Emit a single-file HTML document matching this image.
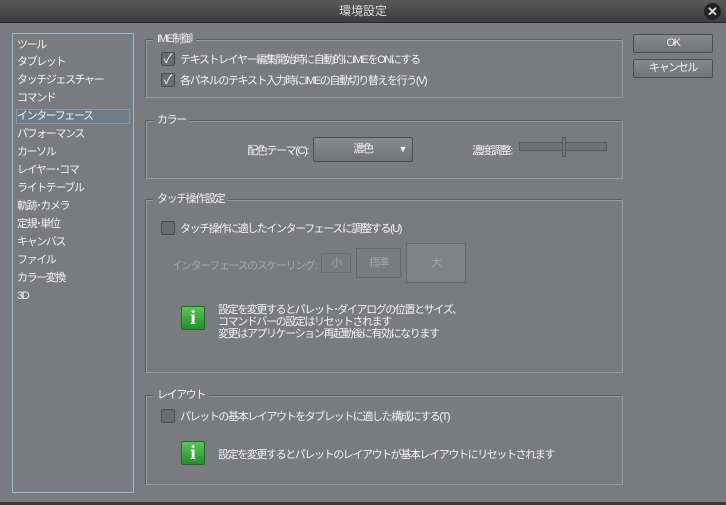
<!DOCTYPE html>
<html><head><meta charset="utf-8"><style>
*{margin:0;padding:0;box-sizing:border-box}
body{width:726px;height:505px;background:#7a7b7e;font-family:"Liberation Sans","Noto Sans CJK JP",sans-serif;font-size:11px;letter-spacing:-1.4px;color:#f2f2f2;position:relative;overflow:hidden}
.abs{position:absolute;white-space:nowrap}
#title{left:0;top:0;width:726px;height:23px;background:linear-gradient(#5a5a5a,#3c3c3c);border-bottom:1px solid #2a2a2a;text-align:center;line-height:23px;color:#ddd;font-size:12px;letter-spacing:0}
#close{right:5px;top:3px;width:17px;height:17px;border-radius:50%;background:#222;color:#ddd;font-weight:bold;font-size:13px;line-height:17px;text-align:center;letter-spacing:0}
#list{left:12px;top:33px;width:122px;height:460px;border:1px solid #9cb8c8}
.it{position:absolute;left:4px;line-height:14px}
#sel{position:absolute;left:3px;top:75px;width:114px;height:15px;background:#6d7c88;border:1px solid #8797a3}
.grp{position:absolute;left:145px;width:478px;border:1px solid #5c5d60;border-right:1px solid #98999c;border-bottom:1px solid #98999c;box-shadow:inset 1px 1px 0 #98999c}
.gt{position:absolute;left:7px;top:-9px;background:#7a7b7e;padding:0 4px;line-height:16px;white-space:nowrap}
.cb{position:absolute;width:14px;height:14px;border:1px solid #4a4b4e;background:#6a6b6e;border-radius:2px;font-size:13px;line-height:12px;text-align:center;color:#eee;letter-spacing:0}
.btn{position:absolute;left:633px;width:80px;height:19px;border:1px solid #4c4d50;background:linear-gradient(#88898c,#727376);border-radius:2px;text-align:center;line-height:17px}
.info{position:absolute;width:24px;height:24px;background:linear-gradient(#5ec35a,#23912a);border:1px solid #1f6b22;border-radius:2px;color:#fff;font-family:"Liberation Serif",serif;font-weight:bold;font-size:20px;text-align:center;line-height:22px;letter-spacing:0}
.dim{color:#a5a6a9}
.r{position:absolute;white-space:nowrap;text-align:right}
</style></head><body>
<div id="title" class="abs">環境設定</div>
<div id="close" class="abs">✕</div>
<div id="list" class="abs">
<div id="sel"></div>
<div class="it" style="top:4px">ツール</div>
<div class="it" style="top:21px">タブレット</div>
<div class="it" style="top:39px">タッチジェスチャー</div>
<div class="it" style="top:57px">コマンド</div>
<div class="it" style="top:75px">インターフェース</div>
<div class="it" style="top:93px">パフォーマンス</div>
<div class="it" style="top:111px">カーソル</div>
<div class="it" style="top:129px">レイヤー･コマ</div>
<div class="it" style="top:147px">ライトテーブル</div>
<div class="it" style="top:165px">軌跡･カメラ</div>
<div class="it" style="top:183px">定規･単位</div>
<div class="it" style="top:201px">キャンバス</div>
<div class="it" style="top:219px">ファイル</div>
<div class="it" style="top:237px">カラー変換</div>
<div class="it" style="top:255px">3D</div>
</div>
<div class="btn" style="top:34px">OK</div>
<div class="btn" style="top:59px">キャンセル</div>

<div class="grp" style="top:39px;height:59px"><div class="gt">IME制御</div></div>
<div class="cb" style="left:161px;top:52px">✓</div><div class="abs" style="left:180px;top:51px">テキストレイヤー編集開始時に自動的にIMEをONにする</div>
<div class="cb" style="left:161px;top:73px">✓</div><div class="abs" style="left:180px;top:72px">各パネルのテキスト入力時にIMEの自動切り替えを行う(V)</div>

<div class="grp" style="top:120px;height:59px"><div class="gt">カラー</div></div>
<div class="r" style="right:418px;top:142px">配色テーマ(C):</div>
<div class="abs" style="left:313px;top:137px;width:100px;height:25px;border:1px solid #4c4d50;border-radius:2px;background:linear-gradient(#88898c,#727376);text-align:center;line-height:23px">濃色<span style="position:absolute;right:6px;top:0;font-size:9px">▼</span></div>
<div class="r" style="right:214px;top:142px">濃度調整:</div>
<div class="abs" style="left:519px;top:142px;width:88px;height:9px;border:1px solid #5a5b5e;background:#717275"></div>
<div class="abs" style="left:562px;top:137px;width:4px;height:20px;border:1px solid #55565a;background:#77787b"></div>

<div class="grp" style="top:199px;height:174px"><div class="gt">タッチ操作設定</div></div>
<div class="cb" style="left:161px;top:221px"></div><div class="abs" style="left:180px;top:220px">タッチ操作に適したインターフェースに調整する(U)</div>
<div class="r dim" style="right:410px;top:257px">インターフェースのスケーリング:</div>
<div class="abs dim" style="left:321px;top:253px;width:30px;height:20px;border:1px solid #6a6b6e;text-align:center;line-height:18px">小</div>
<div class="abs dim" style="left:356px;top:248px;width:45px;height:30px;border:1px solid #666769;text-align:center;line-height:28px">標準</div>
<div class="abs dim" style="left:406px;top:243px;width:60px;height:40px;border:1px solid #666769;background:#818285;text-align:center;line-height:38px">大</div>
<div class="info" style="left:181px;top:306px">i</div>
<div class="abs" style="left:218px;top:304px;line-height:12px">設定を変更するとパレット･ダイアログの位置とサイズ、<br>コマンドバーの設定はリセットされます<br>変更はアプリケーション再起動後に有効になります</div>

<div class="grp" style="top:395px;height:90px"><div class="gt">レイアウト</div></div>
<div class="cb" style="left:161px;top:409px"></div><div class="abs" style="left:180px;top:408px">パレットの基本レイアウトをタブレットに適した構成にする(T)</div>
<div class="info" style="left:181px;top:441px">i</div>
<div class="abs" style="left:218px;top:446px">設定を変更するとパレットのレイアウトが基本レイアウトにリセットされます</div>
<div class="abs" style="left:0;top:502px;width:726px;height:3px;background:#3a3a3a"></div>
</body></html>
